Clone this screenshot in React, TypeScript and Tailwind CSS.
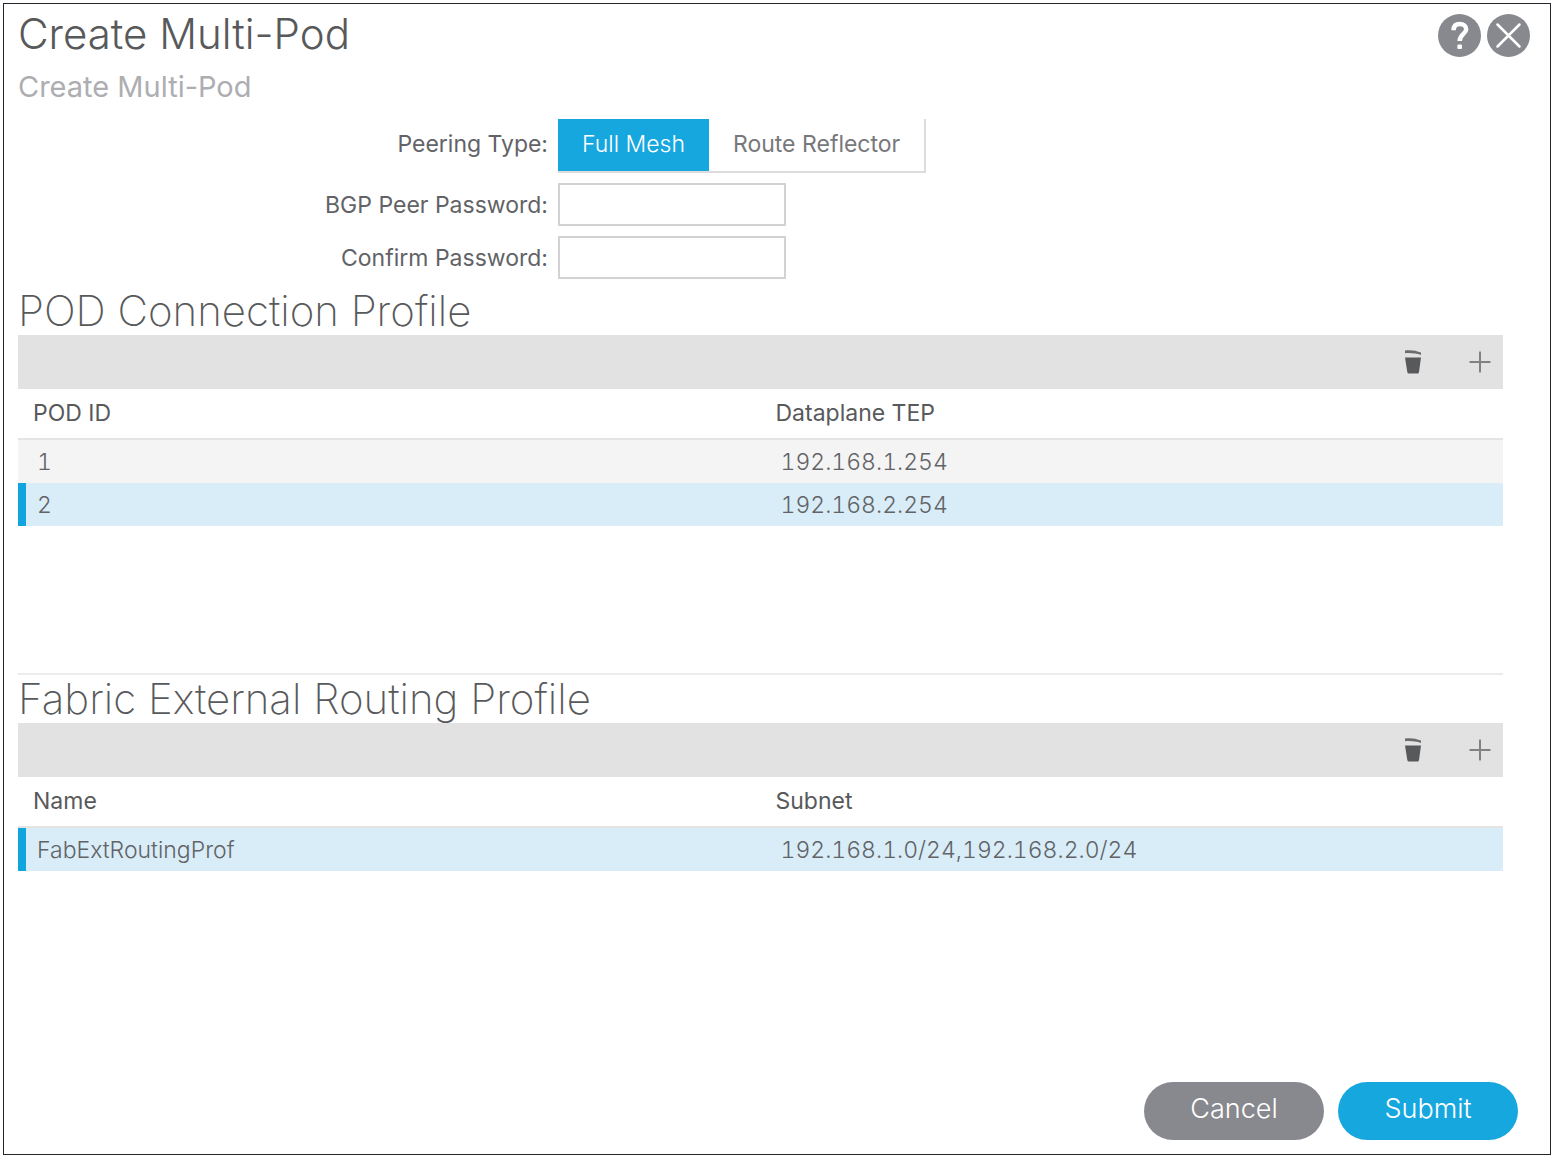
import React, { useState } from 'react';

type Row = { id: string; cells: [string, string] };

interface ProfileTableProps {
  title: string;
  columns: [string, string];
  rows: Row[];
  initialSelected: string;
}

const podRows: Row[] = [
  { id: 'pod-1', cells: ['1', '192.168.1.254'] },
  { id: 'pod-2', cells: ['2', '192.168.2.254'] },
];

const routingRows: Row[] = [
  { id: 'fab-ext', cells: ['FabExtRoutingProf', '192.168.1.0/24,192.168.2.0/24'] },
];

const peeringTypes = ['Full Mesh', 'Route Reflector'];

const TrashIcon = () => (
  <svg width="18" height="26" viewBox="0 0 18 26" aria-hidden="true">
    <path d="M1 1.6C6 .6 12 1.400 17 3.6V5.900C12 4.300 6 3.600 1 4.200Z" fill="#6b6c6e" />
    <path d="M1 8.500H17L15 23Q14.800 24.500 13.500 24.500H5Q3.600 24.500 3.300 23Z" fill="#58595b" />
  </svg>
);

const PlusIcon = () => (
  <svg width="22" height="22" viewBox="0 0 22 22" aria-hidden="true">
    <path d="M11 .5V21.500M.5 11H21.500" stroke="#808183" strokeWidth="2" fill="none" />
  </svg>
);

const HelpIcon = () => (
  <svg width="43" height="43" viewBox="0 0 43 43" aria-hidden="true">
    <circle cx="21.500" cy="21.500" r="21.500" fill="#88898e" />
    <path
      d="M15.600 16.200C15.600 12 18 10 21.700 10C25.600 10 28.200 12.100 28.200 15.300C28.200 20 21.700 20.100 21.700 27"
      stroke="#fff"
      strokeWidth="4.500"
      fill="none"
    />
    <rect x="19.400" y="30.500" width="4.600" height="4.500" rx="1" fill="#fff" />
  </svg>
);

const CloseIcon = () => (
  <svg width="43" height="43" viewBox="0 0 43 43" aria-hidden="true">
    <circle cx="21.500" cy="21.500" r="21.500" fill="#88898e" />
    <path d="M10.500 10.500L32.500 32.500M32.500 10.500L10.500 32.500" stroke="#fff" strokeWidth="2.500" strokeLinecap="round" />
  </svg>
);

const ProfileTable: React.FC<ProfileTableProps> = ({ title, columns, rows, initialSelected }) => {
  const [selected, setSelected] = useState(initialSelected);

  return (
    <section>
      <h2 className="text-[42px] leading-[48px] font-extralight text-[#58595b]">{title}</h2>

      {/* Toolbar */}
      <div className="flex h-[54px] items-center justify-end gap-[47px] bg-[#e2e2e2] pr-3">
        <button type="button" aria-label={`Delete from ${title}`}>
          <TrashIcon />
        </button>
        <button type="button" aria-label={`Add to ${title}`}>
          <PlusIcon />
        </button>
      </div>

      <table className="w-full table-fixed border-separate border-spacing-0 text-left">
        <thead>
          <tr className="h-[51px] text-[#58595b]">
            {columns.map((column) => (
              <th key={column} scope="col" className="w-1/2 border-b-2 border-[#e4e4e4] px-[15px] pb-0.5 font-normal">
                {column}
              </th>
            ))}
          </tr>
        </thead>
        <tbody className="tabular-nums">
          {rows.map((row) => {
            const isSelected = row.id === selected;
            return (
              <tr
                key={row.id}
                onClick={() => setSelected(row.id)}
                className={isSelected ? 'h-[43px] bg-[#d8edf8]' : 'h-[43px] bg-[#f4f4f4]'}
              >
                <td className={isSelected ? 'border-l-8 border-[#10a5df] pl-[11px]' : 'pl-[19px]'}>{row.cells[0]}</td>
                <td className="pl-5">{row.cells[1]}</td>
              </tr>
            );
          })}
        </tbody>
      </table>
    </section>
  );
};

export default function App() {
  const [peeringType, setPeeringType] = useState('Full Mesh');

  return (
    <div className="flex min-h-screen bg-white p-[3px] font-['Inter',sans-serif] text-[23px] leading-8 font-light text-[#626366]">
      <main className="flex flex-1 flex-col border border-[#26262c] pl-3.5">
        {/* Header */}
        <header className="flex items-start justify-between pr-5">
          <div>
            <h1 className="text-[42px] leading-[60px] font-light text-[#58595b]">Create Multi-Pod</h1>
            <p className="text-[29px] leading-[46px] font-normal text-[#adaeb1]">Create Multi-Pod</p>
          </div>
          <div className="flex gap-1.5 pt-2.5">
            <button type="button" aria-label="Help">
              <HelpIcon />
            </button>
            <button type="button" aria-label="Close">
              <CloseIcon />
            </button>
          </div>
        </header>

        <form className="flex flex-1 flex-col pt-[9px]" onSubmit={(e) => e.preventDefault()}>
          <div className="grid grid-cols-[530px_1fr] items-center gap-x-2.5 gap-y-2.5 pb-2">
            <span id="peering-label" className="pb-1 text-right font-normal">
              Peering Type:
            </span>
            <div
              role="radiogroup"
              aria-labelledby="peering-label"
              className="flex h-[54px] justify-self-start border-r-2 border-b-2 border-[#dcdcdc]"
            >
              {peeringTypes.map((type) => (
                <label
                  key={type}
                  className="flex items-center px-6 pb-0.5 font-normal text-[#77787b] has-checked:bg-[#17a7df] has-checked:font-light has-checked:text-white"
                >
                  <input
                    type="radio"
                    name="peering"
                    className="sr-only"
                    checked={peeringType === type}
                    onChange={() => setPeeringType(type)}
                  />
                  {type}
                </label>
              ))}
            </div>

            <label htmlFor="bgp-password" className="text-right font-normal">
              BGP Peer Password:
            </label>
            <input id="bgp-password" type="password" className="h-[43px] w-[228px] border-2 border-[#d2d2d2] px-2" />

            <label htmlFor="confirm-password" className="text-right font-normal">
              Confirm Password:
            </label>
            <input id="confirm-password" type="password" className="h-[43px] w-[228px] border-2 border-[#d2d2d2] px-2" />
          </div>

          <div className="flex-1 pr-[47px]">
            <div className="min-h-[388px] border-b-2 border-[#ececec]">
              <ProfileTable
                title="POD Connection Profile"
                columns={['POD ID', 'Dataplane TEP']}
                rows={podRows}
                initialSelected="pod-2"
              />
            </div>
            <ProfileTable
              title="Fabric External Routing Profile"
              columns={['Name', 'Subnet']}
              rows={routingRows}
              initialSelected="fab-ext"
            />
          </div>

          {/* Footer */}
          <footer className="flex justify-end gap-3.5 pr-8 pb-3.5 text-[27px] text-white">
            <button type="button" className="h-[58px] w-[180px] rounded-full bg-[#88898e] pb-1">
              Cancel
            </button>
            <button type="submit" className="h-[58px] w-[180px] rounded-full bg-[#17a7df] pb-1">
              Submit
            </button>
          </footer>
        </form>
      </main>
    </div>
  );
}
